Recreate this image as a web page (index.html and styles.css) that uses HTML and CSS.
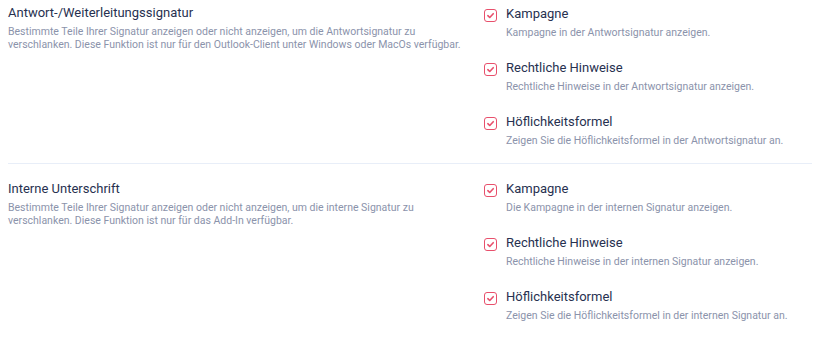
FILE: index.html
```html
<!DOCTYPE html>
<html lang="de">
<head>
    <meta charset="UTF-8">
    <meta name="viewport" content="width=device-width, initial-scale=1.0">
    <title>Signatur-Einstellungen</title>
    <link rel="stylesheet" href="styles.css">
</head>
<body>
    <div class="settings">
        <section class="setting-group">
            <div class="group-info">
                <h3>Antwort-/Weiterleitungssignatur</h3>
                <p>Bestimmte Teile Ihrer Signatur anzeigen oder nicht anzeigen, um die Antwortsignatur zu verschlanken. Diese Funktion ist nur für den Outlook-Client unter Windows oder MacOs verfügbar.</p>
            </div>
            <div class="options">
                <label class="option">
                    <input type="checkbox" checked>
                    <span class="box"><svg viewBox="0 0 10 10"><path d="M2.6 5.2 L4.3 6.8 L7.5 3.4"/></svg></span>
                    <span class="option-text">
                        <strong>Kampagne</strong>
                        <small>Kampagne in der Antwortsignatur anzeigen.</small>
                    </span>
                </label>
                <label class="option">
                    <input type="checkbox" checked>
                    <span class="box"><svg viewBox="0 0 10 10"><path d="M2.6 5.2 L4.3 6.8 L7.5 3.4"/></svg></span>
                    <span class="option-text">
                        <strong>Rechtliche Hinweise</strong>
                        <small>Rechtliche Hinweise in der Antwortsignatur anzeigen.</small>
                    </span>
                </label>
                <label class="option">
                    <input type="checkbox" checked>
                    <span class="box"><svg viewBox="0 0 10 10"><path d="M2.6 5.2 L4.3 6.8 L7.5 3.4"/></svg></span>
                    <span class="option-text">
                        <strong>Höflichkeitsformel</strong>
                        <small>Zeigen Sie die Höflichkeitsformel in der Antwortsignatur an.</small>
                    </span>
                </label>
            </div>
        </section>

        <section class="setting-group">
            <div class="group-info">
                <h3>Interne Unterschrift</h3>
                <p>Bestimmte Teile Ihrer Signatur anzeigen oder nicht anzeigen, um die interne Signatur zu verschlanken. Diese Funktion ist nur für das Add-In verfügbar.</p>
            </div>
            <div class="options">
                <label class="option">
                    <input type="checkbox" checked>
                    <span class="box"><svg viewBox="0 0 10 10"><path d="M2.6 5.2 L4.3 6.8 L7.5 3.4"/></svg></span>
                    <span class="option-text">
                        <strong>Kampagne</strong>
                        <small>Die Kampagne in der internen Signatur anzeigen.</small>
                    </span>
                </label>
                <label class="option">
                    <input type="checkbox" checked>
                    <span class="box"><svg viewBox="0 0 10 10"><path d="M2.6 5.2 L4.3 6.8 L7.5 3.4"/></svg></span>
                    <span class="option-text">
                        <strong>Rechtliche Hinweise</strong>
                        <small>Rechtliche Hinweise in der internen Signatur anzeigen.</small>
                    </span>
                </label>
                <label class="option">
                    <input type="checkbox" checked>
                    <span class="box"><svg viewBox="0 0 10 10"><path d="M2.6 5.2 L4.3 6.8 L7.5 3.4"/></svg></span>
                    <span class="option-text">
                        <strong>Höflichkeitsformel</strong>
                        <small>Zeigen Sie die Höflichkeitsformel in der internen Signatur an.</small>
                    </span>
                </label>
            </div>
        </section>
    </div>
</body>
</html>
```

FILE: styles.css
```css
body {
    font-family: Roboto, 'Liberation Sans', sans-serif;
    margin: 0;
    padding: 0;
    background: #fff;
    color: #2f3a56;
}
.settings {
    padding: 4px 1px 0 8px;
}
.setting-group {
    display: grid;
    grid-template-columns: 476px 1fr;
    padding: 0 0 13px;
}
.setting-group + .setting-group {
    border-top: 1px solid #e8eef8;
    padding-top: 15px;
}
.setting-group + .setting-group .group-info {
    padding-top: 1px;
}
.group-info h3 {
    font-size: 13px;
    font-weight: 400;
    margin: 0 0 3px;
    line-height: 18px;
    color: #273150;
}
.group-info p {
    font-size: 10.5px;
    line-height: 13px;
    color: #8b93ab;
    margin: 0;
    max-width: 470px;
}
.options {
    display: flex;
    flex-direction: column;
    gap: 16px;
}
.option {
    display: flex;
    align-items: flex-start;
    gap: 9px;
    cursor: pointer;
}
.option input {
    display: none;
}
.box {
    width: 11px;
    height: 11px;
    border: 1px solid #e8506c;
    border-radius: 3px;
    margin-top: 5px;
    flex: none;
    background: #fff;
}
.box svg {
    display: block;
    width: 11px;
    height: 11px;
}
.box path {
    fill: none;
    stroke: #e8506c;
    stroke-width: 1.5;
    stroke-linecap: round;
    stroke-linejoin: round;
}
.option-text {
    display: flex;
    flex-direction: column;
}
.option-text strong {
    font-size: 13px;
    font-weight: 400;
    line-height: 19px;
    color: #273150;
}
.option-text small {
    font-size: 10.5px;
    line-height: 19px;
    color: #8b93ab;
}
```
